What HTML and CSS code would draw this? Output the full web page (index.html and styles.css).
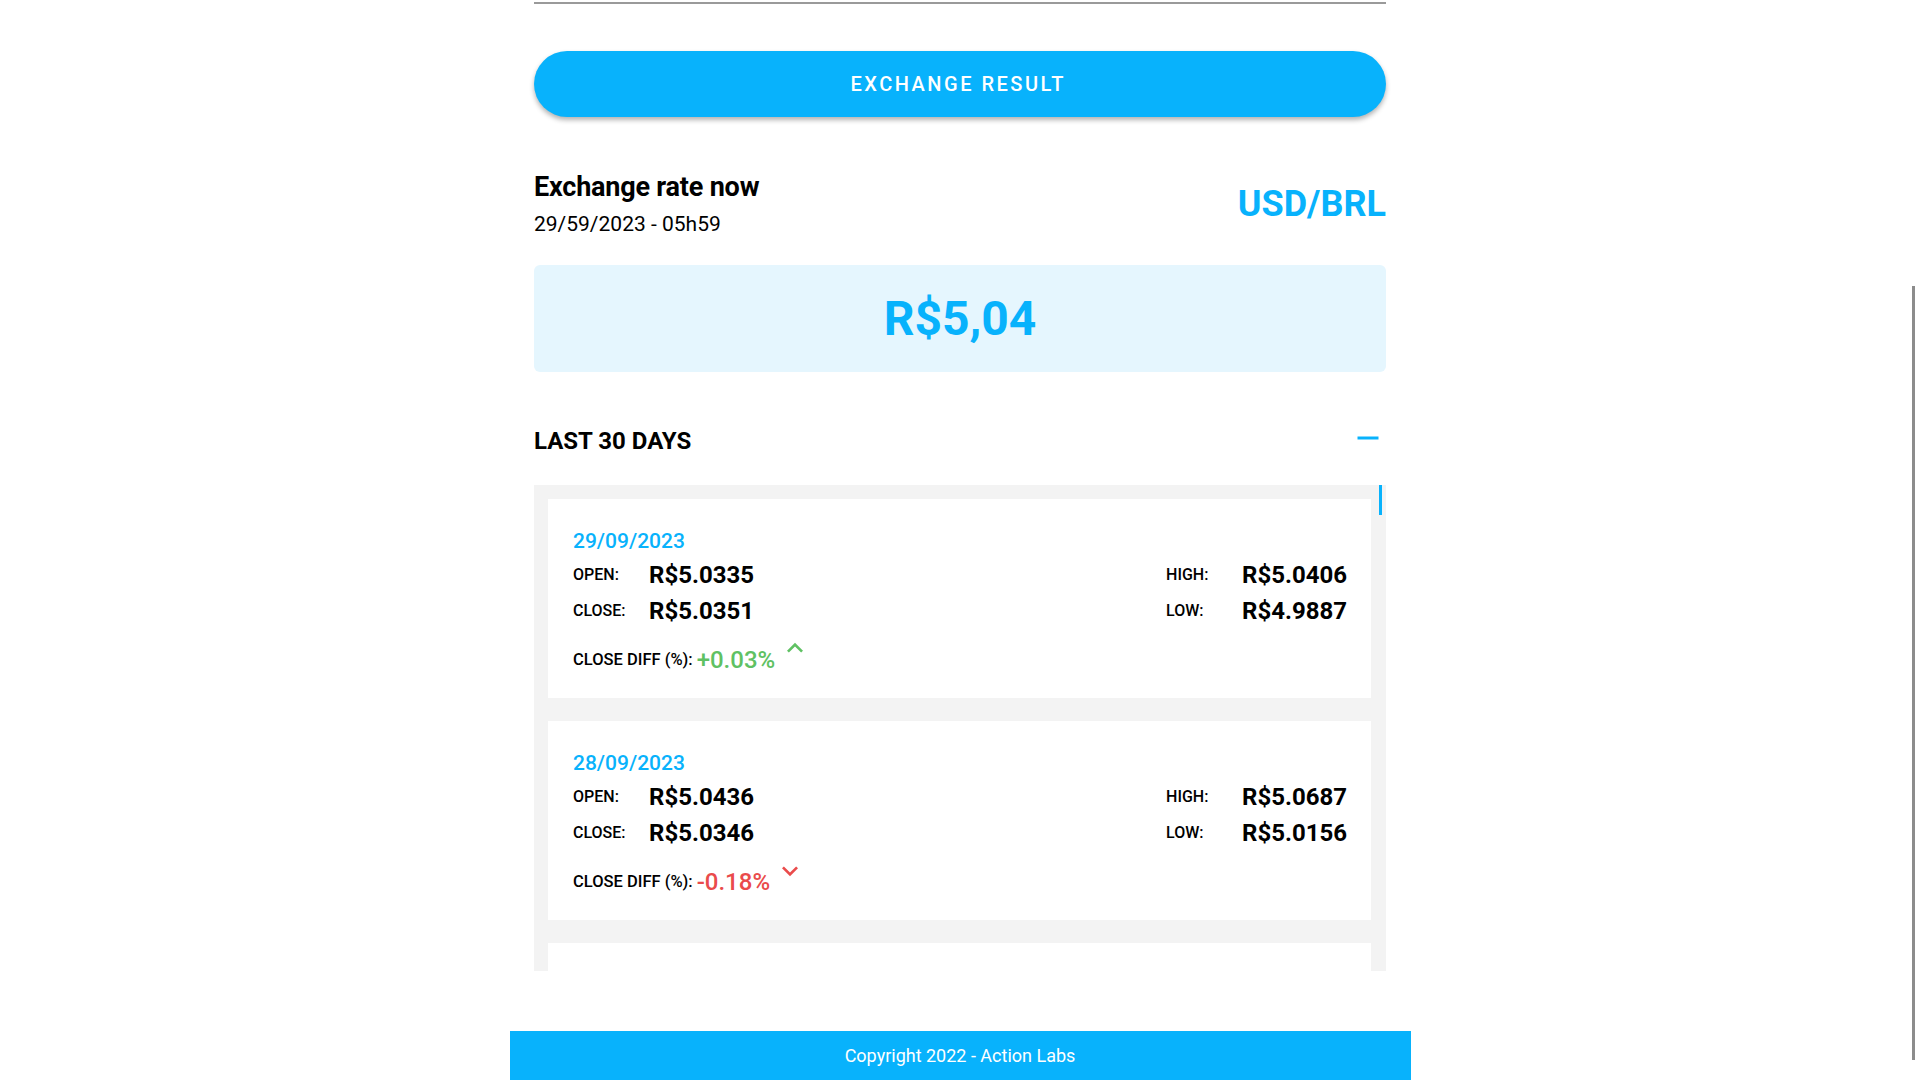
FILE: index.html
```html
<!DOCTYPE html>
<html lang="en">
<head>
<meta charset="utf-8">
<title>Exchange result</title>
<link rel="stylesheet" href="styles.css">
</head>
<body>
<div class="page">
  <main class="main">
    <div class="input-line"></div>
    <button class="btn-result">EXCHANGE RESULT</button>

    <section class="rate-head">
      <div class="rate-info">
        <h2 class="rate-title">Exchange rate now</h2>
        <div class="rate-date">29/59/2023 - 05h59</div>
      </div>
      <div class="pair">USD/BRL</div>
    </section>

    <div class="rate-box">R$5,04</div>

    <section class="days-head">
      <h3 class="days-title">LAST 30 DAYS</h3>
      <svg class="icon-minus" viewBox="0 0 24 24" width="36" height="36"><path d="M19 13H5v-2h14v2z"/></svg>
    </section>

    <div class="days-list">
      <div class="days-scroll">
        <article class="day-card">
          <div class="day-date">29/09/2023</div>
          <div class="day-values">
            <div class="vgrid">
              <span class="lbl">OPEN:</span><span class="val">R$5.0335</span>
              <span class="lbl">CLOSE:</span><span class="val">R$5.0351</span>
            </div>
            <div class="vgrid">
              <span class="lbl">HIGH:</span><span class="val">R$5.0406</span>
              <span class="lbl">LOW:</span><span class="val">R$4.9887</span>
            </div>
          </div>
          <div class="diff">
            <span class="lbl">CLOSE DIFF (%):</span>
            <span class="diff-val up">+0.03%</span>
            <svg class="chev up" viewBox="0 0 24 24" width="32" height="32"><path d="M12 8l-6 6 1.41 1.41L12 10.83l4.59 4.58L18 14z"/></svg>
          </div>
        </article>

        <article class="day-card">
          <div class="day-date">28/09/2023</div>
          <div class="day-values">
            <div class="vgrid">
              <span class="lbl">OPEN:</span><span class="val">R$5.0436</span>
              <span class="lbl">CLOSE:</span><span class="val">R$5.0346</span>
            </div>
            <div class="vgrid">
              <span class="lbl">HIGH:</span><span class="val">R$5.0687</span>
              <span class="lbl">LOW:</span><span class="val">R$5.0156</span>
            </div>
          </div>
          <div class="diff">
            <span class="lbl">CLOSE DIFF (%):</span>
            <span class="diff-val down">-0.18%</span>
            <svg class="chev down" viewBox="0 0 24 24" width="32" height="32"><path d="M16.59 8.59L12 13.17 7.41 8.59 6 10l6 6 6-6z"/></svg>
          </div>
        </article>

        <article class="day-card day-card-next"></article>
      </div>
      <div class="list-thumb"></div>
    </div>
  </main>

  <footer class="footer">Copyright 2022 - Action Labs</footer>
</div>
<div class="page-thumb"></div>
</body>
</html>
```

FILE: styles.css
```css
* { box-sizing: border-box; }

html, body {
  margin: 0;
  padding: 0;
  height: 1080px;
  overflow: hidden;
  background: #ffffff;
  font-family: Roboto, "Liberation Sans", Arial, sans-serif;
  color: #000;
}

.page {
  display: flex;
  flex-direction: column;
  align-items: center;
}

.main {
  width: 852px;
  display: flex;
  flex-direction: column;
}

.input-line {
  margin-top: 2px;
  height: 2px;
  background: #9a9a9a;
}

.btn-result {
  margin-top: 47px;
  height: 66px;
  border: none;
  border-radius: 33px;
  background: #08b2fc;
  color: #fff;
  font-family: Roboto, "Liberation Sans", Arial, sans-serif;
  font-size: 20px;
  font-weight: 500;
  letter-spacing: 2.5px;
  padding-left: 2.5px;
  box-shadow: 0 3px 5px rgba(0, 0, 0, 0.3);
  cursor: pointer;
}

.rate-head {
  margin-top: 55px;
  display: flex;
  justify-content: space-between;
  align-items: center;
}

.rate-title {
  margin: 0;
  font-size: 27px;
  line-height: 30px;
  font-weight: 700;
  letter-spacing: -0.2px;
}

.rate-date {
  margin-top: 10px;
  font-size: 21px;
  line-height: 24px;
}

.pair {
  font-size: 36px;
  font-weight: 700;
  color: #08b2fc;
  line-height: 40px;
}

.rate-box {
  margin-top: 29px;
  height: 107px;
  border-radius: 6px;
  background: #e5f6fe;
  color: #08b2fc;
  font-size: 48px;
  font-weight: 700;
  display: flex;
  align-items: center;
  justify-content: center;
}

.days-head {
  margin-top: 48px;
  height: 36px;
  display: flex;
  justify-content: space-between;
  align-items: center;
}

.days-title {
  margin: 6px 0 0;
  font-size: 24px;
  line-height: 28px;
  font-weight: 700;
}

.icon-minus { fill: #08b2fc; display: block; }

.days-list {
  position: relative;
  margin-top: 29px;
  height: 486px;
  background: #f3f3f3;
  padding: 14px 15px 0 14px;
  overflow: hidden;
}

.days-scroll {
  display: flex;
  flex-direction: column;
  gap: 23px;
}

.list-thumb {
  position: absolute;
  top: 0;
  right: 4px;
  width: 3px;
  height: 30px;
  background: #08b2fc;
}

.day-card {
  background: #fff;
  height: 199px;
  padding: 30px 24px 20px 25px;
  flex-shrink: 0;
}

.day-date {
  font-size: 21px;
  line-height: 24px;
  font-weight: 500;
  color: #08b2fc;
}

.day-values {
  margin-top: 4px;
  display: flex;
  justify-content: space-between;
}

.vgrid {
  display: grid;
  grid-template-columns: 76px auto;
  align-items: center;
}

.lbl {
  font-size: 16px;
  font-weight: 500;
  line-height: 36px;
}

.diff .lbl { font-size: 16.5px; }

.val {
  font-size: 24px;
  font-weight: 700;
  line-height: 36px;
}

.diff {
  margin-top: 13px;
  height: 36px;
  display: flex;
  align-items: center;
}

.diff-val {
  margin-left: 4px;
  font-size: 24px;
  font-weight: 500;
  line-height: 36px;
}

.diff-val.up { color: #5fc163; }
.diff-val.down { color: #ea4b4b; }

.chev {
  align-self: flex-start;
  margin-top: -10px;
  margin-left: 4px;
}

.chev.up { fill: #5fc163; }
.chev.down { fill: #ea4b4b; margin-top: -9px; }

.footer {
  margin-top: 60px;
  width: 901px;
  height: 49px;
  background: #08b2fc;
  color: #fff;
  font-size: 18px;
  display: flex;
  align-items: center;
  justify-content: center;
}

.page-thumb {
  position: fixed;
  right: 5px;
  top: 286px;
  width: 3px;
  height: 774px;
  background: #8c8c8c;
}
```
